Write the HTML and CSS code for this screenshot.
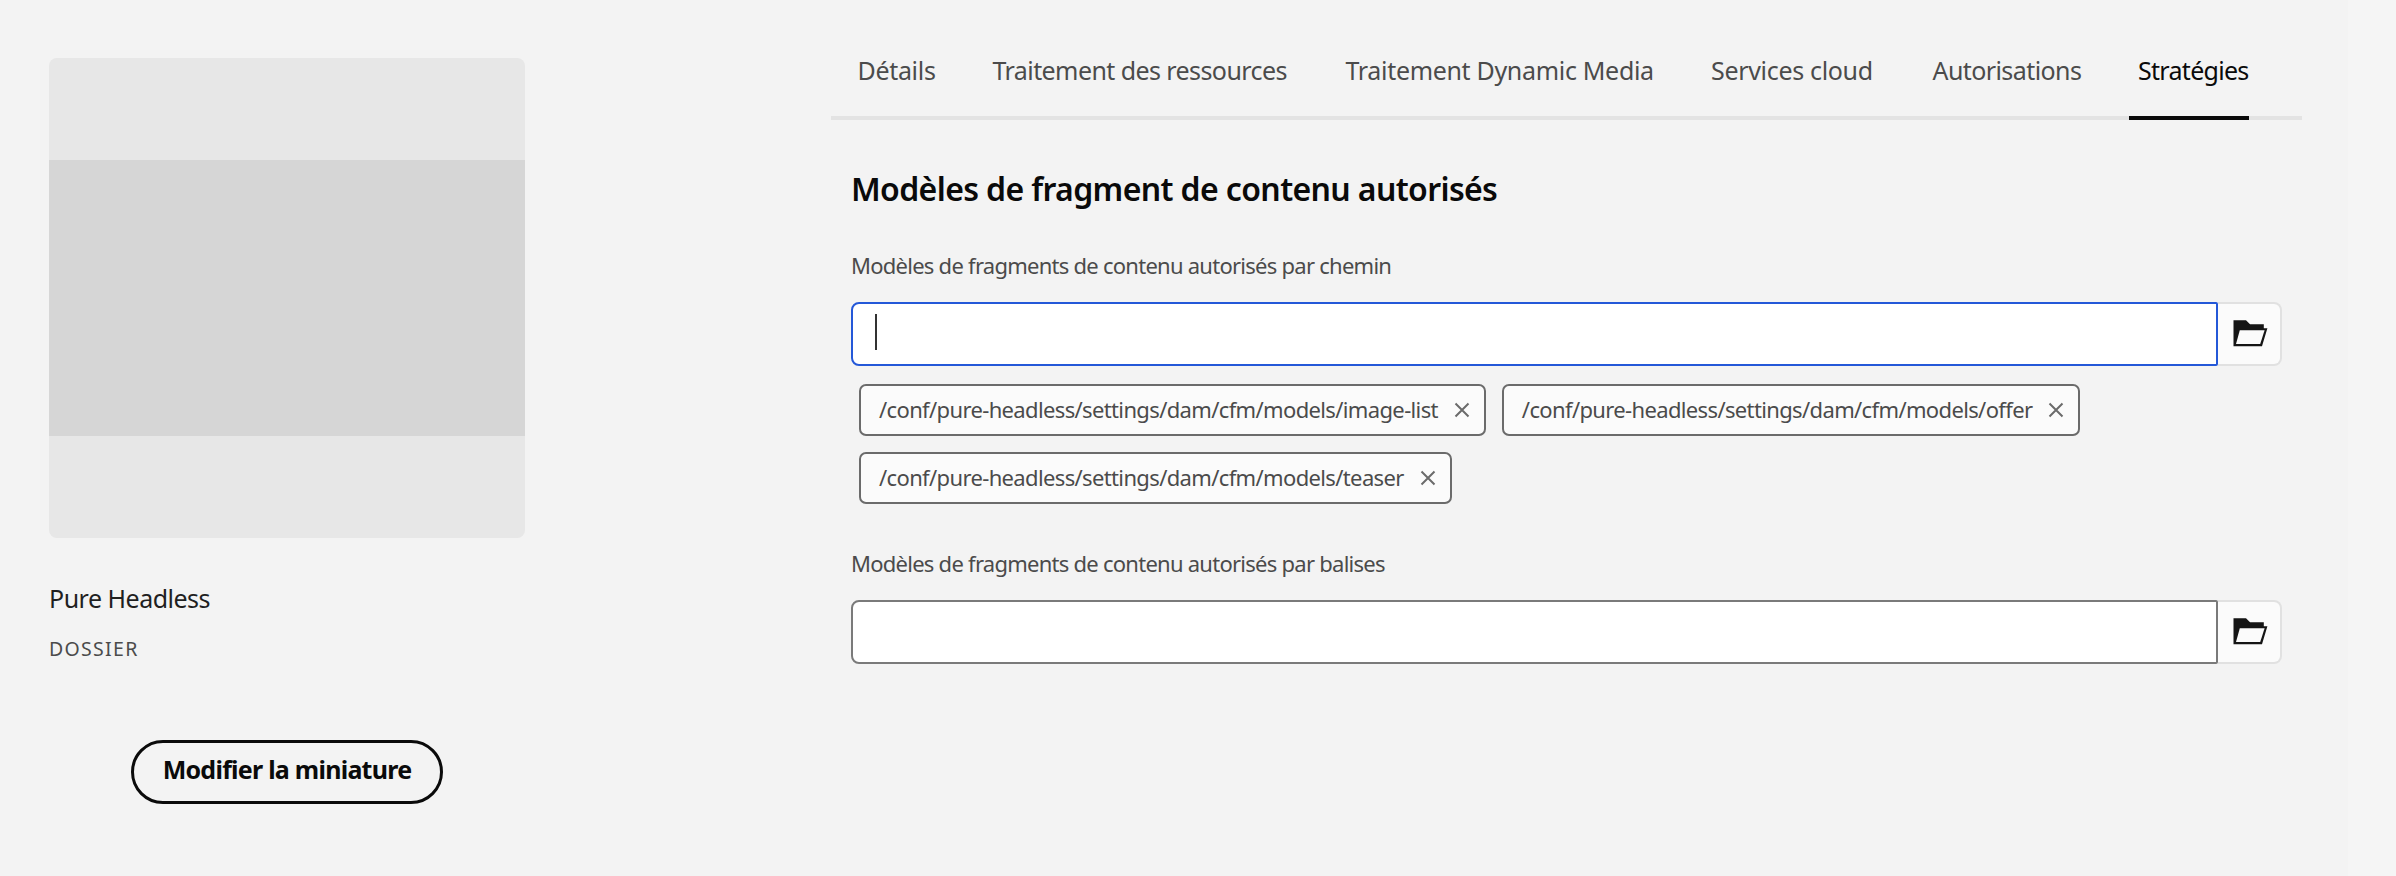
FILE: index.html
```
<!DOCTYPE html>
<html lang="fr">
<head>
<meta charset="utf-8">
<title>Pure Headless</title>
<link rel="stylesheet" href="styles.css">
</head>
<body>
<main class="page">
  <aside class="side">
    <div class="thumb"><div class="thumb-band"></div></div>
    <div class="name">Pure Headless</div>
    <div class="kind">DOSSIER</div>
    <button class="edit" type="button">Modifier la miniature</button>
  </aside>
  <section class="content">
    <nav class="tabs">
      <a class="tab">Détails</a>
      <a class="tab tab-tight">Traitement des ressources</a>
      <a class="tab">Traitement Dynamic Media</a>
      <a class="tab">Services cloud</a>
      <a class="tab tab-tight">Autorisations</a>
      <a class="tab tab-active">Stratégies</a>
    </nav>
    <div class="panel">
      <h1 class="heading">Modèles de fragment de contenu autorisés</h1>
      <div class="label">Modèles de fragments de contenu autorisés par chemin</div>
      <div class="field">
        <div class="input input-focus"><span class="caret"></span></div>
        <div class="browse"><svg class="folder" viewBox="0 0 36 28"><path fill="#151515" d="M1.5 0.3H14L18 4.2H31.8V8.2H35.4L30 26.2H1.5Z"/><path fill="#fbfbfb" d="M7.8 10.2H32.6L28.2 24H4Z"/></svg></div>
      </div>
      <div class="chips">
        <div class="chip"><span class="chip-text">/conf/pure-headless/settings/dam/cfm/models/image-list</span><svg class="close" viewBox="0 0 16 16"><path d="M1.5 1.5L14.5 14.5M14.5 1.5L1.5 14.5"/></svg></div>
        <div class="chip"><span class="chip-text">/conf/pure-headless/settings/dam/cfm/models/offer</span><svg class="close" viewBox="0 0 16 16"><path d="M1.5 1.5L14.5 14.5M14.5 1.5L1.5 14.5"/></svg></div>
        <div class="chip"><span class="chip-text">/conf/pure-headless/settings/dam/cfm/models/teaser</span><svg class="close" viewBox="0 0 16 16"><path d="M1.5 1.5L14.5 14.5M14.5 1.5L1.5 14.5"/></svg></div>
      </div>
      <div class="label">Modèles de fragments de contenu autorisés par balises</div>
      <div class="field">
        <div class="input"></div>
        <div class="browse"><svg class="folder" viewBox="0 0 36 28"><path fill="#151515" d="M1.5 0.3H14L18 4.2H31.8V8.2H35.4L30 26.2H1.5Z"/><path fill="#fbfbfb" d="M7.8 10.2H32.6L28.2 24H4Z"/></svg></div>
      </div>
    </div>
  </section>
  <div class="gutter"></div>
</main>
</body>
</html>
```
FILE: styles.css
```
* { box-sizing: border-box; }
body {
  margin: 0;
  background: #f3f3f3;
  color: #4b4b4b;
  font-family: "Noto Sans", "Open Sans", sans-serif;
}
.page {
  display: flex;
  width: 2396px;
  height: 876px;
  overflow: hidden;
}
.side {
  display: flex;
  flex-direction: column;
  width: 831px;
  padding: 58px 0 0 49px;
}
.thumb {
  width: 476px;
  height: 480px;
  padding-top: 102px;
  background: #e7e7e7;
  border-radius: 8px;
  overflow: hidden;
}
.thumb-band { height: 276px; background: #d6d6d6; }
.name {
  margin-top: 40px;
  color: #1f1f1f;
  font-size: 25px;
  line-height: 40px;
  letter-spacing: -0.5px;
}
.kind {
  margin-top: 17px;
  color: #4b4b4b;
  font-size: 19.5px;
  line-height: 28px;
  letter-spacing: 1.3px;
}
.edit {
  width: 312px;
  height: 64px;
  margin: 77px 0 0 82px;
  padding: 0 0 7px;
  border: 3px solid #0a0a0a;
  border-radius: 32px;
  background: transparent;
  color: #0a0a0a;
  font: 700 25px "Noto Sans", "Open Sans", sans-serif;
  letter-spacing: -0.75px;
}
.content { width: 1471px; padding-top: 40px; }
.gutter {
  width: 48px;
  margin-left: auto;
  background: #f5f5f5;
}
.tabs {
  display: grid;
  grid-template-columns: 135px 353px 365.5px 221.5px 196.5px 120px;
  height: 80px;
  padding-left: 26.5px;
  border-bottom: 4px solid #e3e3e3;
  font-size: 25px;
  line-height: 60px;
  letter-spacing: -0.32px;
  white-space: nowrap;
}
.tab-tight { letter-spacing: -0.58px; }
.tab-active {
  height: 80px;
  padding-left: 9px;
  border-bottom: 4px solid #0a0a0a;
  color: #0a0a0a;
  letter-spacing: -0.7px;
}
.panel { padding: 49px 20px 0; }
.heading {
  margin: 0;
  color: #0a0a0a;
  font-size: 32px;
  font-weight: 600;
  line-height: 40px;
  letter-spacing: -0.63px;
}
.label {
  margin: 41px 0 22px;
  font-size: 22px;
  line-height: 30px;
  letter-spacing: -0.74px;
}
.field { display: flex; height: 64px; }
.input {
  display: flex;
  width: 1368px;
  padding: 10px 22px;
  border: 2px solid #7a7a7a;
  border-radius: 8px 2px 2px 8px;
  background: #fff;
}
.input-focus { border-color: #2458d8; }
.caret { width: 2px; height: 36px; background: #333; }
.browse {
  display: flex;
  align-items: center;
  width: 64px;
  padding-left: 14px;
  border: 2px solid #e1e1e1;
  border-left: 0;
  border-radius: 0 8px 8px 0;
  background: #fbfbfb;
}
.folder { width: 36px; height: 28px; }
.chips {
  display: flex;
  flex-wrap: wrap;
  gap: 16px;
  width: 1300px;
  padding: 18px 0 3px 8px;
}
.chip {
  display: flex;
  align-items: center;
  height: 52px;
  padding: 0 14px 2px 18px;
  border: 2px solid #6b6b6b;
  border-radius: 7px;
  background: #fbfbfb;
}
.chip-text {
  font-size: 22px;
  line-height: 30px;
  letter-spacing: -0.64px;
  white-space: nowrap;
}
.close {
  width: 16px;
  height: 16px;
  margin: 2px 0 0 16px;
  fill: none;
  stroke: #6b6b6b;
  stroke-width: 2;
}
```
